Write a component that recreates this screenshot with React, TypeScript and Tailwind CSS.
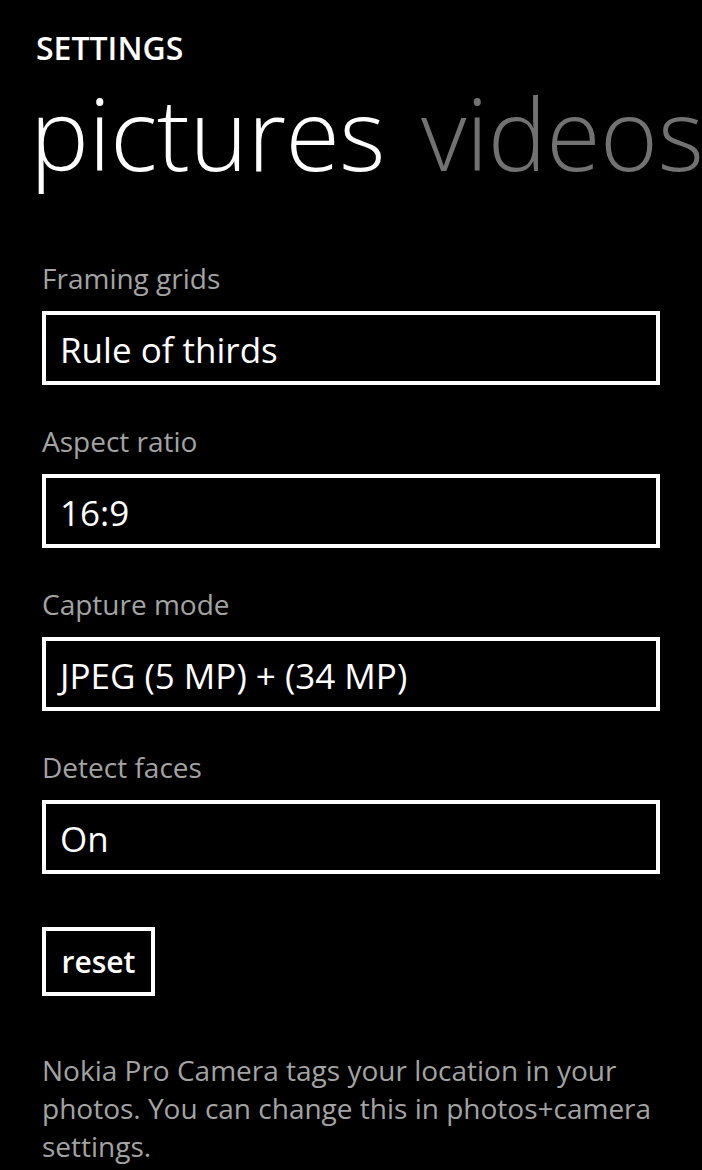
const fields = [
  { label: "Framing grids", value: "Rule of thirds" },
  { label: "Aspect ratio", value: "16:9" },
  { label: "Capture mode", value: "JPEG (5 MP) + (34 MP)" },
  { label: "Detect faces", value: "On" },
];

function Field({ label, value }: { label: string; value: string }) {
  return (
    <div>
      <p className="h-[36px] text-[28px] leading-[36px] text-[#a3a3a3]">{label}</p>
      <div className="mt-[15px] flex h-[74px] items-center border-4 border-white px-[14px] pt-[2px] text-[35px] leading-none text-white">
        {value}
      </div>
    </div>
  );
}

export default function App() {
  return (
    <div
      className="min-h-[1170px] w-full overflow-hidden bg-black text-white"
      style={{ fontFamily: '"Open Sans", "Noto Sans", sans-serif' }}
    >
      {/* Page title */}
      <p className="pl-[36px] pt-[28px] text-[32px] font-semibold leading-[40px]">SETTINGS</p>

      {/* Pivot headers */}
      <div className="mt-[10px] flex gap-[36px] whitespace-nowrap pl-[30px] text-[99px] font-light leading-[110px] tracking-[-0.5px]">
        <span>pictures</span>
        <span className="text-[#727272]">videos</span>
      </div>

      <div className="mt-[72px] px-[42px]">
        <div className="flex flex-col gap-[38px]">
          {fields.map((f) => (
            <Field key={f.label} label={f.label} value={f.value} />
          ))}
        </div>

        <button className="mt-[53px] flex h-[69px] w-[113px] items-center justify-center border-4 border-white text-[30px] font-semibold leading-none text-white">
          reset
        </button>

        <p className="mt-[55px] max-w-[625px] text-[28px] leading-[38px] text-[#a3a3a3]">
          Nokia Pro Camera tags your location in your photos. You can change this in photos+camera settings.
        </p>
      </div>
    </div>
  );
}
